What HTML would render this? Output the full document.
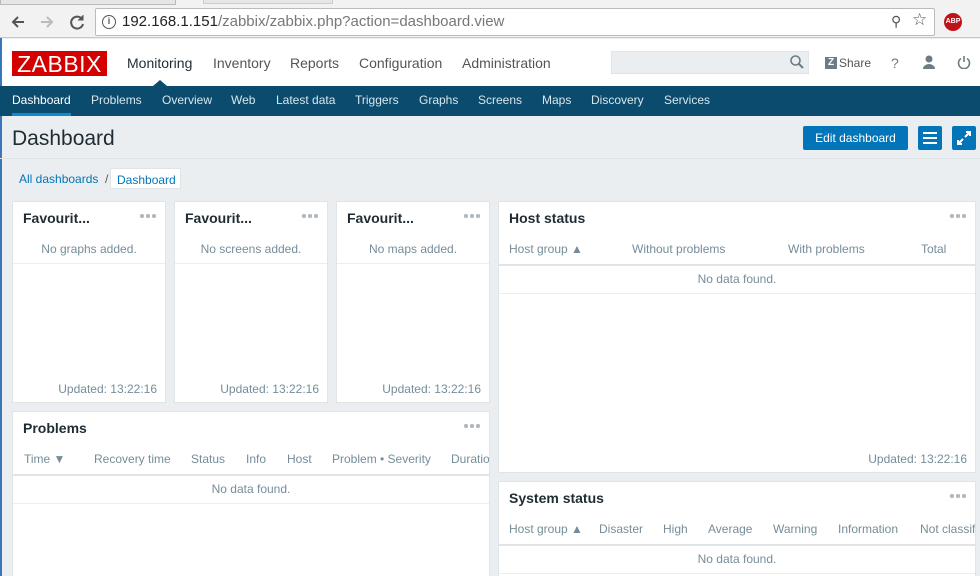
<!DOCTYPE html>
<html><head><style>
*{margin:0;padding:0;box-sizing:border-box}
html,body{width:980px;height:576px;overflow:hidden}
body{background:#ebeef0;font-family:"Liberation Sans",Arial,sans-serif;position:relative;font-size:12px;color:#1f2c33}
.a{position:absolute}
.w{position:absolute;background:#fff;border:1px solid #dfe4e7}
.wt{position:absolute;left:10px;top:8px;font-weight:bold;font-size:14px;color:#1f2c33}
.dots{position:absolute;right:8px;top:12px;width:17px;height:4px}
.dots i{position:absolute;top:0;width:3.5px;height:3.5px;border-radius:50%;background:#b0b8bd}
.g{color:#768d99}
.upd{position:absolute;right:8px;bottom:6px;color:#768d99}
.nav a{position:absolute;color:#fff;top:93px;font-size:12px}
</style></head><body>
<!-- browser chrome -->
<div class="a" style="left:0;top:0;width:980px;height:38px;background:#f2f2f2;border-bottom:1px solid #c8c8c8"></div>
<div class="a" style="left:0;top:0;width:176px;height:5px;border:1px solid #bbb;border-top:0;background:#e6e6e6"></div>
<div class="a" style="left:203px;top:0;width:130px;height:4px;border:1px solid #ccc;border-top:0;background:#e6e6e6"></div>
<svg class="a" style="left:10px;top:13px" width="50" height="18"><path d="M14 9H3M8 4 3 9l5 5" stroke="#555" stroke-width="2" fill="none"/><path d="M42 9H31M37 4l5 5-5 5" stroke="#bbb" stroke-width="2" fill="none"/></svg>
<svg class="a" style="left:68px;top:13px" width="18" height="18"><path d="M14 6A6 6 0 1 0 15 11" stroke="#555" stroke-width="2" fill="none"/><path d="M15 2v5h-5" fill="#555" stroke="#555" stroke-width="1"/></svg>
<div class="a" style="left:95px;top:8px;width:840px;height:28px;background:#fff;border:1px solid #bbb;border-radius:2px"></div>
<div class="a" style="left:102px;top:15px;width:14px;height:14px;border:1.5px solid #555;border-radius:50%;font-size:9px;text-align:center;line-height:11px;font-weight:bold;color:#555">i</div>
<div class="a" style="left:122px;top:13px;font-size:15px;color:#222">192.168.1.151<span style="color:#777">/zabbix/zabbix.php?action=dashboard.view</span></div>
<div class="a" style="left:891px;top:13px;font-size:14px;color:#555">&#9906;</div>
<div class="a" style="left:912px;top:10px;font-size:17px;color:#555">&#9734;</div>
<div class="a" style="left:944px;top:13px;width:18px;height:18px;border-radius:50%;background:#c0121b;color:#fff;font-size:7px;font-weight:bold;text-align:center;line-height:18px">ABP</div>
<!-- header -->
<div class="a" style="left:0;top:39px;width:980px;height:47px;background:#fff"></div>
<div class="a" style="left:0;top:38px;width:2px;height:538px;background:#3b76b8"></div>
<div class="a" style="left:12px;top:51px;width:95px;height:25px;background:#d40000;color:#fff;font-size:23px;line-height:26px;text-align:center;letter-spacing:0.5px">ZABBIX</div>
<div class="a" style="left:127px;top:55px;font-size:14px;color:#1f2c33">Monitoring</div>
<div class="a" style="left:213px;top:55px;font-size:14px;color:#555">Inventory</div>
<div class="a" style="left:290px;top:55px;font-size:14px;color:#555">Reports</div>
<div class="a" style="left:359px;top:55px;font-size:14px;color:#555">Configuration</div>
<div class="a" style="left:462px;top:55px;font-size:14px;color:#555">Administration</div>
<div class="a" style="left:153px;top:80px;width:0;height:0;border-left:7px solid transparent;border-right:7px solid transparent;border-bottom:6px solid #0b4b6d"></div>
<div class="a" style="left:611px;top:51px;width:198px;height:23px;background:#ebeef0;border:1px solid #dfe4e7"></div>
<svg class="a" style="left:790px;top:55px" width="14" height="14"><circle cx="5.5" cy="5.5" r="4.5" stroke="#6d7c83" stroke-width="1.6" fill="none"/><path d="M9 9l4 4" stroke="#6d7c83" stroke-width="2"/></svg>
<div class="a" style="left:825px;top:57px;width:12px;height:12px;background:#6d7c83;color:#fff;font-size:10px;font-weight:bold;text-align:center;line-height:12px">Z</div>
<div class="a" style="left:839px;top:56px;font-size:12px;color:#555">Share</div>
<div class="a" style="left:891px;top:55px;font-size:14px;color:#6d7c83">?</div>
<svg class="a" style="left:922px;top:55px" width="14" height="14"><circle cx="7" cy="4" r="3.5" fill="#6d7c83"/><path d="M1 14a6 5 0 0 1 12 0z" fill="#6d7c83"/></svg>
<svg class="a" style="left:957px;top:55px" width="14" height="14"><path d="M4 3.5a5.5 5.5 0 1 0 6 0" stroke="#6d7c83" stroke-width="1.6" fill="none"/><path d="M7 1v6" stroke="#6d7c83" stroke-width="1.6"/></svg>
<!-- nav -->
<div class="a" style="left:0;top:86px;width:980px;height:30px;background:#0b4b6d"></div>
<div class="nav">
<a style="left:12px">Dashboard</a><a style="left:91px;color:#d9e6ed">Problems</a><a style="left:162px;color:#d9e6ed">Overview</a><a style="left:231px;color:#d9e6ed">Web</a><a style="left:276px;color:#d9e6ed">Latest data</a><a style="left:355px;color:#d9e6ed">Triggers</a><a style="left:419px;color:#d9e6ed">Graphs</a><a style="left:478px;color:#d9e6ed">Screens</a><a style="left:542px;color:#d9e6ed">Maps</a><a style="left:591px;color:#d9e6ed">Discovery</a><a style="left:664px;color:#d9e6ed">Services</a>
</div>
<div class="a" style="left:12px;top:113px;width:59px;height:3px;background:#0f8ad0"></div>
<!-- title -->
<div class="a" style="left:12px;top:127px;font-size:21px;color:#1f2c33">Dashboard</div>
<div class="a" style="left:803px;top:126px;width:105px;height:24px;background:#0275b8;border-radius:2px;color:#fff;font-size:12px;line-height:24px;text-align:center">Edit dashboard</div>
<div class="a" style="left:918px;top:126px;width:24px;height:24px;background:#0275b8;border-radius:2px"></div>
<div class="a" style="left:923px;top:132px;width:14px;height:2px;background:#fff;box-shadow:0 5px 0 #fff,0 10px 0 #fff"></div>
<div class="a" style="left:952px;top:126px;width:24px;height:24px;background:#0275b8;border-radius:2px"></div>
<svg class="a" style="left:955px;top:129px" width="18" height="18"><path d="M10 8l4-4M11 3h4v4M8 10l-4 4M3 11v4h4" stroke="#fff" stroke-width="2" fill="none"/></svg>
<div class="a" style="left:0;top:158px;width:980px;height:1px;background:#dfe4e7"></div>
<div class="a" style="left:19px;top:172px;color:#0275b8">All dashboards</div>
<div class="a" style="left:105px;top:172px;color:#555">/</div>
<div class="a" style="left:110px;top:168px;width:71px;height:21px;background:#fff;border:1px solid #dfe4e7;color:#0275b8;padding:4px 0 0 6px">Dashboard</div>
<!-- fav widgets -->
<div class="w" style="left:12px;top:201px;width:154px;height:202px"><div class="wt">Favourit...</div><div class="dots"><i style="left:0"></i><i style="left:6px"></i><i style="left:12px"></i></div><div class="a g" style="left:0;width:152px;top:40px;text-align:center">No graphs added.</div><div class="a" style="left:0;top:61px;width:152px;height:1px;background:#ebeef0"></div><div class="upd">Updated: 13:22:16</div></div>
<div class="w" style="left:174px;top:201px;width:154px;height:202px"><div class="wt">Favourit...</div><div class="dots"><i style="left:0"></i><i style="left:6px"></i><i style="left:12px"></i></div><div class="a g" style="left:0;width:152px;top:40px;text-align:center">No screens added.</div><div class="a" style="left:0;top:61px;width:152px;height:1px;background:#ebeef0"></div><div class="upd">Updated: 13:22:16</div></div>
<div class="w" style="left:336px;top:201px;width:154px;height:202px"><div class="wt">Favourit...</div><div class="dots"><i style="left:0"></i><i style="left:6px"></i><i style="left:12px"></i></div><div class="a g" style="left:0;width:152px;top:40px;text-align:center">No maps added.</div><div class="a" style="left:0;top:61px;width:152px;height:1px;background:#ebeef0"></div><div class="upd">Updated: 13:22:16</div></div>
<!-- host status -->
<div class="w" style="left:498px;top:201px;width:478px;height:272px"><div class="wt">Host status</div><div class="dots"><i style="left:0"></i><i style="left:6px"></i><i style="left:12px"></i></div>
<div class="a g" style="left:10px;top:40px">Host group &#9650;</div><div class="a g" style="left:133px;top:40px">Without problems</div><div class="a g" style="left:289px;top:40px">With problems</div><div class="a g" style="left:422px;top:40px">Total</div>
<div class="a" style="left:0;top:62px;width:476px;height:2px;background:#dfe4e7"></div>
<div class="a g" style="left:0;width:476px;top:70px;text-align:center">No data found.</div>
<div class="a" style="left:0;top:91px;width:476px;height:1px;background:#ebeef0"></div>
<div class="upd">Updated: 13:22:16</div></div>
<!-- problems -->
<div class="w" style="left:12px;top:411px;width:478px;height:170px;overflow:hidden"><div class="wt">Problems</div><div class="dots"><i style="left:0"></i><i style="left:6px"></i><i style="left:12px"></i></div>
<div class="a g" style="left:11px;top:40px">Time &#9660;</div><div class="a g" style="left:81px;top:40px">Recovery time</div><div class="a g" style="left:178px;top:40px">Status</div><div class="a g" style="left:233px;top:40px">Info</div><div class="a g" style="left:274px;top:40px">Host</div><div class="a g" style="left:319px;top:40px">Problem &#8226; Severity</div><div class="a g" style="left:438px;top:40px;white-space:nowrap">Duration</div>
<div class="a" style="left:0;top:62px;width:476px;height:2px;background:#dfe4e7"></div>
<div class="a g" style="left:0;width:476px;top:70px;text-align:center">No data found.</div>
<div class="a" style="left:0;top:91px;width:476px;height:1px;background:#ebeef0"></div></div>
<!-- system status -->
<div class="w" style="left:498px;top:481px;width:478px;height:100px;overflow:hidden"><div class="wt">System status</div><div class="dots"><i style="left:0"></i><i style="left:6px"></i><i style="left:12px"></i></div>
<div class="a g" style="left:10px;top:40px">Host group &#9650;</div><div class="a g" style="left:100px;top:40px">Disaster</div><div class="a g" style="left:164px;top:40px">High</div><div class="a g" style="left:209px;top:40px">Average</div><div class="a g" style="left:274px;top:40px">Warning</div><div class="a g" style="left:339px;top:40px">Information</div><div class="a g" style="left:421px;top:40px;white-space:nowrap">Not classified</div>
<div class="a" style="left:0;top:62px;width:476px;height:2px;background:#dfe4e7"></div>
<div class="a g" style="left:0;width:476px;top:70px;text-align:center">No data found.</div>
<div class="a" style="left:0;top:91px;width:476px;height:1px;background:#ebeef0"></div></div>
</body></html>
